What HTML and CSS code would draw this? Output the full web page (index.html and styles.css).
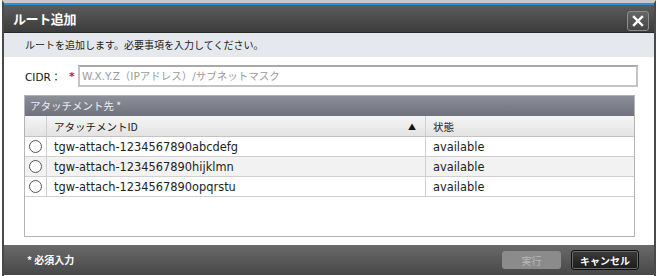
FILE: index.html
```html
<!DOCTYPE html>
<html lang="ja">
<head>
    <meta charset="UTF-8">
    <meta name="viewport" content="width=device-width, initial-scale=1.0">
    <title>ルート追加</title>
    <link rel="stylesheet" href="styles.css">
</head>
<body>
    <div class="dialog">
        <div class="titlebar">
            <span class="title">ルート追加</span>
            <button class="close" type="button" aria-label="閉じる">
                <svg width="12" height="12" viewBox="0 0 12 12">
                    <path d="M2 2 L10 10 M10 2 L2 10" stroke="#fff" stroke-width="2.4" stroke-linecap="square"/>
                </svg>
            </button>
        </div>
        <div class="intro">ルートを追加します。必要事項を入力してください。</div>

        <div class="content">
            <div class="field">
                <label for="cidr" class="field-label">CIDR：</label>
                <span class="req">*</span>
                <input type="text" id="cidr" class="field-input" placeholder="W.X.Y.Z（IPアドレス）/サブネットマスク">
            </div>

            <div class="panel">
                <div class="panel-head">アタッチメント先 *</div>
                <table class="grid">
                    <thead>
                        <tr>
                            <th class="col-sel"></th>
                            <th class="col-id">アタッチメントID<span class="sort">▲</span></th>
                            <th class="col-state">状態</th>
                        </tr>
                    </thead>
                    <tbody>
                        <tr>
                            <td class="col-sel"><span class="radio"></span></td>
                            <td>tgw-attach-1234567890abcdefg</td>
                            <td>available</td>
                        </tr>
                        <tr class="alt">
                            <td class="col-sel"><span class="radio"></span></td>
                            <td>tgw-attach-1234567890hijklmn</td>
                            <td>available</td>
                        </tr>
                        <tr>
                            <td class="col-sel"><span class="radio"></span></td>
                            <td>tgw-attach-1234567890opqrstu</td>
                            <td>available</td>
                        </tr>
                    </tbody>
                </table>
            </div>
        </div>

        <div class="footer">
            <span class="note">* 必須入力</span>
            <div class="actions">
                <button type="button" class="btn btn-disabled" disabled>実行</button>
                <button type="button" class="btn btn-cancel">キャンセル</button>
            </div>
        </div>
    </div>
</body>
</html>
```

FILE: styles.css
```css
html, body {
    margin: 0;
    padding: 0;
    background-color: #fff;
}
body {
    font-family: "DejaVu Sans", "Noto Sans CJK JP", sans-serif;
    font-size: 11px;
    color: #222;
    overflow: hidden;
}
.dialog {
    margin-left: 2px;
    width: 650px;
    height: 280px;
    border-top: 3px solid #c9c9c9;
    border-left: 2px solid #4a4a4a;
    border-right: 2px solid #4a4a4a;
    display: flex;
    flex-direction: column;
}
.titlebar {
    height: 27px;
    border-top: 2px solid #2b8fd6;
    border-bottom: 1px solid #2a2a2a;
    background: linear-gradient(#5c5c5c, #3c3c3c);
    display: flex;
    align-items: center;
    justify-content: space-between;
    padding: 0 5px 0 9px;
}
.title {
    color: #fff;
    font-family: "Noto Sans CJK JP", sans-serif;
    font-weight: bold;
    font-size: 13px;
    letter-spacing: -0.4px;
}
.close {
    width: 22px;
    height: 20px;
    padding: 0;
    border: 1px solid #8c8c8c;
    border-radius: 3px;
    background: linear-gradient(#666, #464646);
    display: flex;
    align-items: center;
    justify-content: center;
    margin-top: 4px;
}
.intro {
    height: 24px;
    line-height: 24px;
    background-color: #e5e8ec;
    padding-left: 21px;
    font-family: "Noto Sans CJK JP", sans-serif;
    font-size: 10px;
    color: #222;
}
.content {
    background-color: #fff;
    padding: 8px 16px 8px 20px;
}
.field {
    display: flex;
    align-items: center;
    height: 22px;
}
.field-label {
    width: 44px;
    padding-left: 1px;
    font-size: 10.5px;
    color: #111;
}
.req {
    color: #c0204a;
    width: 9px;
    font-weight: bold;
}
.field-input {
    flex: 1;
    height: 22px;
    box-sizing: border-box;
    border: 2px solid #c4c4c4;
    border-top-color: #a9a9a9;
    padding: 0 2px;
    font-family: "DejaVu Sans", "Noto Sans CJK JP", sans-serif;
    font-size: 10.5px;
    outline: none;
}
.field-input::placeholder {
    color: #9a9a9a;
}
.panel {
    margin: 8px 3px 0 0;
    height: 142px;
    box-sizing: border-box;
    border: 1px solid #b4b4b4;
    background-color: #fff;
}
.panel-head {
    height: 20px;
    line-height: 20px;
    padding-left: 5px;
    background: linear-gradient(#8c8f98, #6f727c);
    color: #eceef2;
    font-family: "Noto Sans CJK JP", sans-serif;
    font-size: 10.5px;
}
.grid {
    width: 100%;
    border-collapse: collapse;
    table-layout: fixed;
}
.grid th, .grid td {
    height: 19px;
    padding: 0 0 0 7px;
    text-align: left;
    font-weight: normal;
    font-size: 11.4px;
    border-right: 1px solid #cfcfcf;
    border-bottom: 1px solid #cfcfcf;
    white-space: nowrap;
}
.grid th {
    height: 20px;
    background: linear-gradient(#f5f5f5, #e3e3e3);
    font-family: "Noto Sans CJK JP", sans-serif;
    font-size: 10.5px;
    border-bottom-color: #c3c3c3;
}
.grid th:last-child, .grid td:last-child {
    border-right: none;
}
.grid .col-sel {
    width: 17px;
    padding: 0 0 0 4px;
}
.grid .col-id {
    width: 371px;
    position: relative;
}
.sort {
    position: absolute;
    right: 9px;
    top: 5px;
    font-size: 8px;
    color: #111;
}
.grid tr.alt td {
    background-color: #f2f2f2;
}
.radio {
    display: block;
    width: 11px;
    height: 11px;
    border: 1px solid #555;
    border-radius: 50%;
    background-color: #fff;
}
.footer {
    height: 30px;
    background: linear-gradient(#6a6a6a, #474747);
    display: flex;
    align-items: flex-start;
    justify-content: space-between;
    padding: 0 15px 0 23px;
}
.note {
    color: #fff;
    font-family: "Noto Sans CJK JP", sans-serif;
    font-weight: bold;
    font-size: 10px;
    line-height: 30px;
}
.actions {
    display: flex;
    gap: 10px;
    padding-top: 5px;
}
.btn {
    font-family: "Noto Sans CJK JP", sans-serif;
    font-size: 10px;
    border-radius: 3px;
    padding: 0;
}
.btn-disabled {
    width: 59px;
    height: 18px;
    margin-top: 1px;
    border: none;
    background-color: #8b8b8b;
    color: #b7b7b7;
}
.btn-cancel {
    width: 68px;
    height: 20px;
    border: 1px solid #101010;
    box-shadow: inset 0 0 0 1px #6a6a6a;
    background: linear-gradient(#3a3a3a, #1c1c1c);
    color: #fff;
    font-weight: bold;
}
```
